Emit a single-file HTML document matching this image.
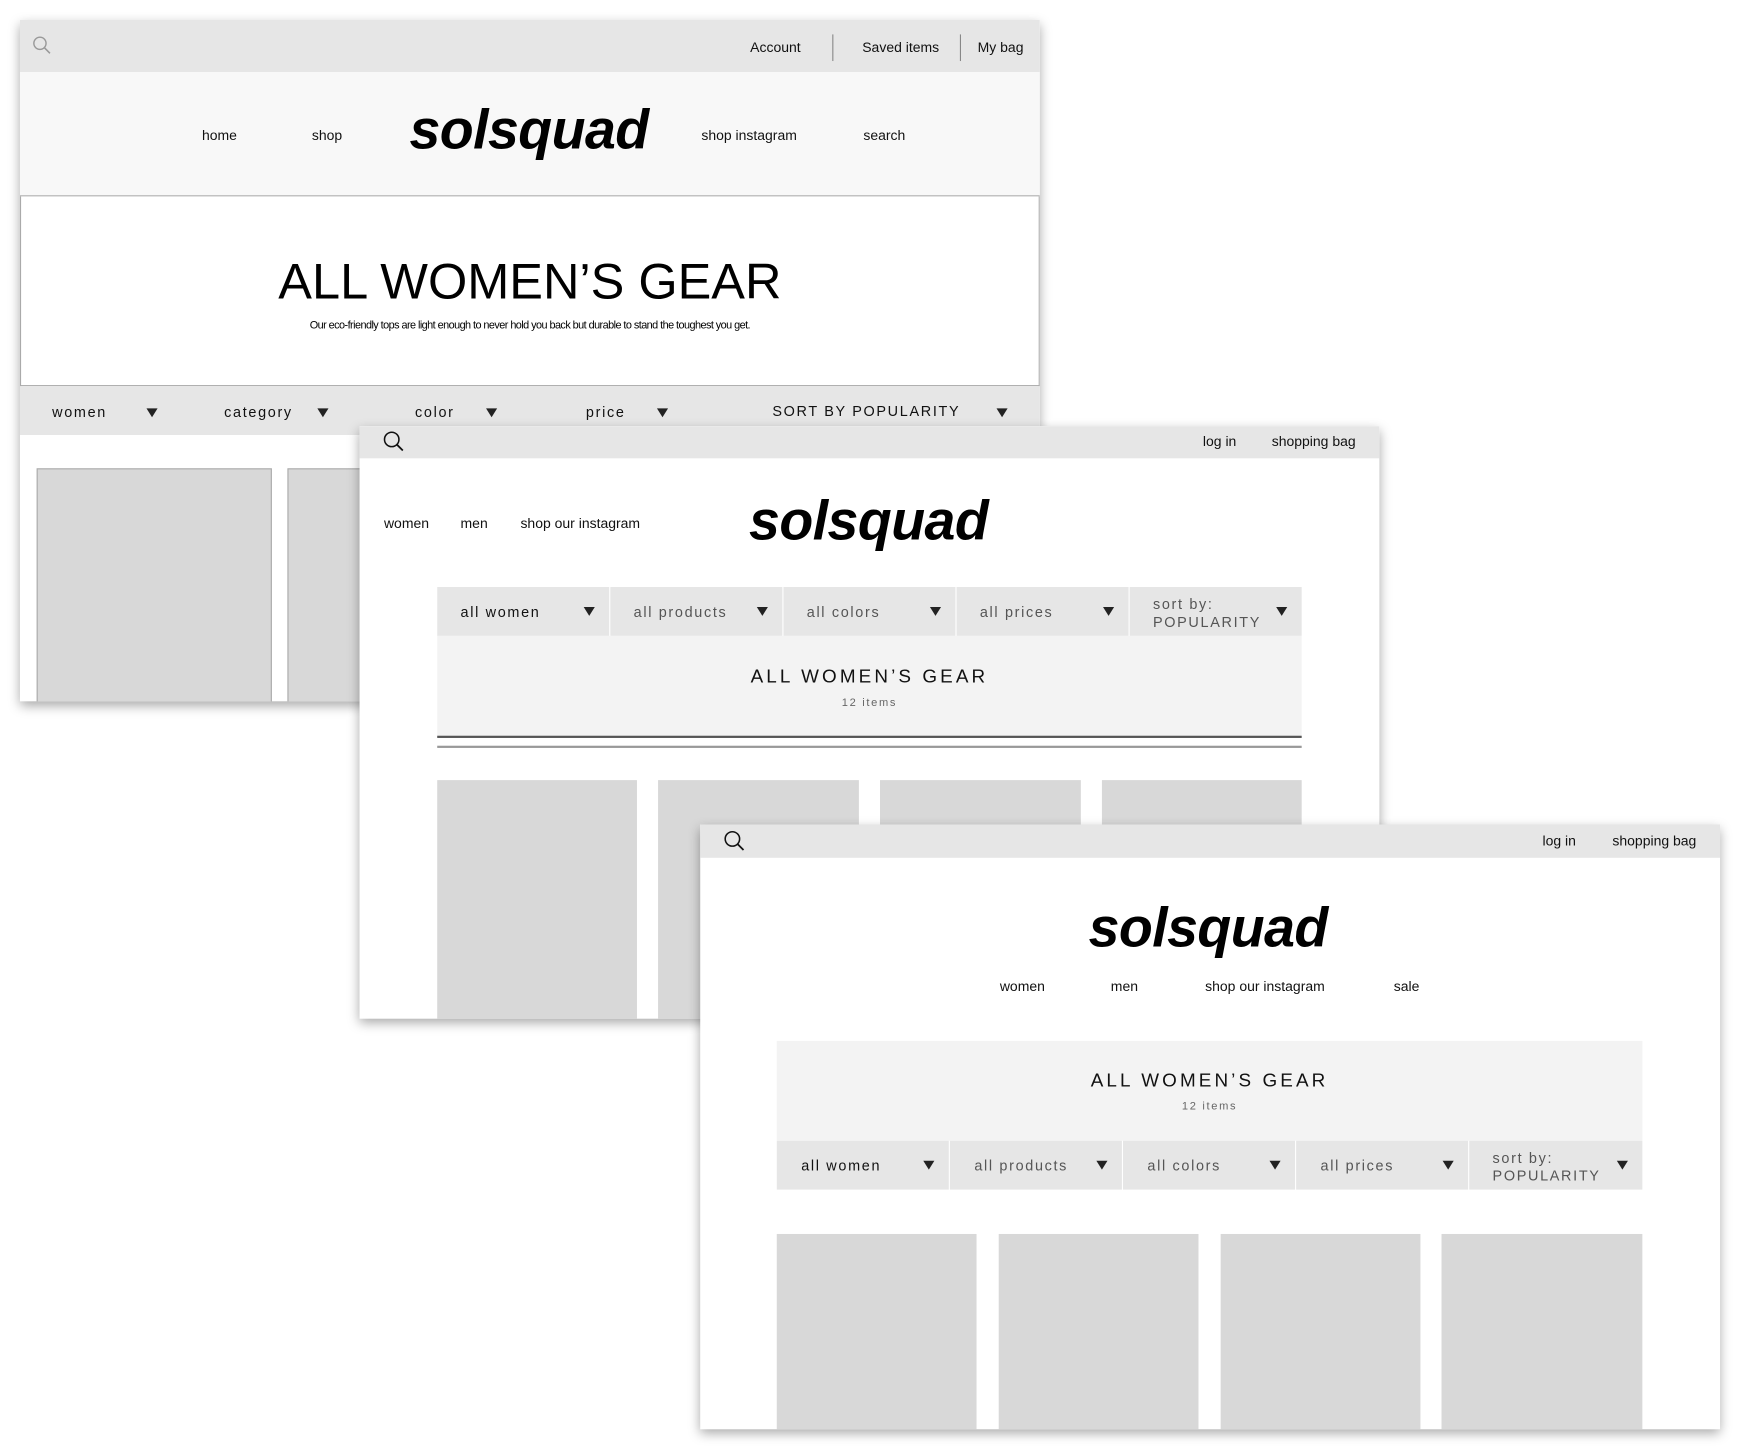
<!DOCTYPE html>
<html><head><meta charset="utf-8"><style>
html,body{margin:0;padding:0;background:#fff;width:1740px;height:1448px;overflow:hidden}
#s{position:absolute;left:0;top:0;width:1568px;height:1305px;transform:scale(1.1097);transform-origin:0 0;font-family:"Liberation Sans",Arial,sans-serif;color:#111}
.w{position:absolute;background:#fff;box-shadow:0 4px 10px rgba(0,0,0,.35);overflow:hidden}
.a{position:absolute;white-space:nowrap;line-height:1}
.bar{position:absolute;left:0;right:0;top:0;background:#e6e6e6}
.logo{position:absolute;font-weight:bold;font-style:italic;font-size:50px;line-height:1;letter-spacing:-0.5px;color:#000}
.t{font-size:12.6px}
.f{font-size:13px;letter-spacing:1.5px}
.tri{position:absolute;width:0;height:0;border-left:5px solid transparent;border-right:5px solid transparent;border-top:8px solid #222}
.box{position:absolute;background:#d8d8d8}
.cell{position:absolute;top:0;height:44px;background:#e6e6e6}
</style></head><body><div id="s">

<!-- Window 1 -->
<div class="w" style="left:18px;top:18px;width:919px;height:614px;background:#fff">
  <div class="bar" style="height:47px"></div>
  <svg style="position:absolute;left:10px;top:13px" width="20" height="20" viewBox="0 0 20 20"><circle cx="8" cy="8" r="5.5" fill="none" stroke="#999" stroke-width="1.3"/><path d="M12 12 L17 17" stroke="#999" stroke-width="1.4"/></svg>
  <div class="a t" style="left:658px;top:19px">Account</div>
  <div style="position:absolute;left:732px;top:13px;width:1px;height:24px;background:#888"></div>
  <div class="a t" style="left:759px;top:19px">Saved items</div>
  <div style="position:absolute;left:847px;top:13px;width:1px;height:24px;background:#888"></div>
  <div class="a t" style="left:863px;top:19px">My bag</div>
  <div style="position:absolute;left:0;right:0;top:47px;height:111px;background:#f8f8f8;border-bottom:1px solid #aaa"></div>
  <div class="a t" style="left:164px;top:98px">home</div>
  <div class="a t" style="left:263px;top:98px">shop</div>
  <div class="logo" style="left:351px;top:74px">solsquad</div>
  <div class="a t" style="left:614px;top:98px">shop instagram</div>
  <div class="a t" style="left:760px;top:98px">search</div>
  <div style="position:absolute;left:0;top:159px;width:917px;height:170px;border:1px solid #aaa;border-top:none;background:#fff"></div>
  <div class="a" style="left:0;width:919px;text-align:center;top:213px;font-size:45.5px;letter-spacing:0;color:#000">ALL WOMEN’S GEAR</div>
  <div class="a" style="left:0;width:919px;text-align:center;top:271px;font-size:9.8px;letter-spacing:-0.5px;color:#000">Our eco-friendly tops are light enough to never hold you back but durable to stand the toughest you get.</div>
  <div style="position:absolute;left:0;right:0;top:330px;height:44px;background:#e6e6e6"></div>
  <div class="a f" style="left:29px;top:347px">women</div><div class="tri" style="left:114px;top:350px"></div>
  <div class="a f" style="left:184px;top:347px">category</div><div class="tri" style="left:268px;top:350px"></div>
  <div class="a f" style="left:356px;top:347px">color</div><div class="tri" style="left:420px;top:350px"></div>
  <div class="a f" style="left:510px;top:347px">price</div><div class="tri" style="left:574px;top:350px"></div>
  <div class="a f" style="left:678px;top:346px">SORT BY POPULARITY</div><div class="tri" style="left:880px;top:350px"></div>
  <div class="box" style="left:15px;top:404px;width:210px;height:220px;border:1px solid #aaa"></div>
  <div class="box" style="left:241px;top:404px;width:210px;height:220px;border:1px solid #aaa"></div>
</div>

<!-- Window 2 -->
<div class="w" style="left:324px;top:384px;width:919px;height:534px">
  <div class="bar" style="height:29px"></div>
  <svg style="position:absolute;left:20px;top:3px" width="22" height="22" viewBox="0 0 22 22"><circle cx="9" cy="9" r="6.5" fill="none" stroke="#111" stroke-width="1.4"/><path d="M13.5 13.5 L19 19" stroke="#111" stroke-width="1.6"/></svg>
  <div class="a t" style="left:760px;top:8px">log in</div>
  <div class="a t" style="left:822px;top:8px">shopping bag</div>
  <div class="a t" style="left:22px;top:82px">women</div>
  <div class="a t" style="left:91px;top:82px">men</div>
  <div class="a t" style="left:145px;top:82px">shop our instagram</div>
  <div class="logo" style="left:351px;top:60px">solsquad</div>
  <div style="position:absolute;left:70px;top:145px;width:779px;height:44px;background:#fff">
    <div class="cell" style="left:0;width:155px"></div><div class="cell" style="left:156px;width:155px"></div><div class="cell" style="left:312px;width:155px"></div><div class="cell" style="left:468px;width:155px"></div><div class="cell" style="left:624px;width:155px"></div>
    <div class="a f" style="left:21px;top:16px;color:#111">all women</div><div class="tri" style="left:132px;top:18px"></div>
    <div class="a f" style="left:177px;top:16px;color:#555">all products</div><div class="tri" style="left:288px;top:18px"></div>
    <div class="a f" style="left:333px;top:16px;color:#555">all colors</div><div class="tri" style="left:444px;top:18px"></div>
    <div class="a f" style="left:489px;top:16px;color:#555">all prices</div><div class="tri" style="left:600px;top:18px"></div>
    <div class="a f" style="left:645px;top:9px;color:#555">sort by:</div><div class="a f" style="left:645px;top:25px;color:#555">POPULARITY</div><div class="tri" style="left:756px;top:18px"></div>
  </div>
  <div style="position:absolute;left:70px;top:189px;width:779px;height:90px;background:#f3f3f3;border-bottom:2px solid #555"></div>
  <div class="a" style="left:70px;width:779px;text-align:center;top:217px;font-size:17px;letter-spacing:2.8px;color:#111">ALL WOMEN’S GEAR</div>
  <div class="a" style="left:70px;width:779px;text-align:center;top:245px;font-size:10px;letter-spacing:1.5px;color:#666">12 items</div>
  <div style="position:absolute;left:70px;top:288px;width:779px;height:2px;background:#999"></div>
  <div class="box" style="left:70px;top:319px;width:180px;height:230px"></div>
  <div class="box" style="left:269px;top:319px;width:181px;height:230px"></div>
  <div class="box" style="left:469px;top:319px;width:181px;height:230px"></div>
  <div class="box" style="left:669px;top:319px;width:180px;height:230px"></div>
</div>

<!-- Window 3 -->
<div class="w" style="left:631px;top:743px;width:919px;height:545px">
  <div class="bar" style="height:30px"></div>
  <svg style="position:absolute;left:20px;top:4px" width="22" height="22" viewBox="0 0 22 22"><circle cx="9" cy="9" r="6.5" fill="none" stroke="#111" stroke-width="1.4"/><path d="M13.5 13.5 L19 19" stroke="#111" stroke-width="1.6"/></svg>
  <div class="a t" style="left:759px;top:9px">log in</div>
  <div class="a t" style="left:822px;top:9px">shopping bag</div>
  <div class="logo" style="left:350px;top:68px">solsquad</div>
  <div class="a t" style="left:270px;top:140px">women</div>
  <div class="a t" style="left:370px;top:140px">men</div>
  <div class="a t" style="left:455px;top:140px">shop our instagram</div>
  <div class="a t" style="left:625px;top:140px">sale</div>
  <div style="position:absolute;left:69px;top:195px;width:780px;height:90px;background:#f3f3f3"></div>
  <div class="a" style="left:69px;width:780px;text-align:center;top:222px;font-size:17px;letter-spacing:2.8px;color:#111">ALL WOMEN’S GEAR</div>
  <div class="a" style="left:69px;width:780px;text-align:center;top:250px;font-size:10px;letter-spacing:1.5px;color:#666">12 items</div>
  <div style="position:absolute;left:69px;top:285px;width:780px;height:44px;background:#fff">
    <div class="cell" style="left:0;width:155px"></div><div class="cell" style="left:156px;width:155px"></div><div class="cell" style="left:312px;width:155px"></div><div class="cell" style="left:468px;width:155px"></div><div class="cell" style="left:624px;width:156px"></div>
    <div class="a f" style="left:22px;top:16px;color:#111">all women</div><div class="tri" style="left:132px;top:18px"></div>
    <div class="a f" style="left:178px;top:16px;color:#555">all products</div><div class="tri" style="left:288px;top:18px"></div>
    <div class="a f" style="left:334px;top:16px;color:#555">all colors</div><div class="tri" style="left:444px;top:18px"></div>
    <div class="a f" style="left:490px;top:16px;color:#555">all prices</div><div class="tri" style="left:600px;top:18px"></div>
    <div class="a f" style="left:645px;top:9px;color:#555">sort by:</div><div class="a f" style="left:645px;top:25px;color:#555">POPULARITY</div><div class="tri" style="left:757px;top:18px"></div>
  </div>
  <div class="box" style="left:69px;top:369px;width:180px;height:180px"></div>
  <div class="box" style="left:269px;top:369px;width:180px;height:180px"></div>
  <div class="box" style="left:469px;top:369px;width:180px;height:180px"></div>
  <div class="box" style="left:668px;top:369px;width:181px;height:180px"></div>
</div>

</div></body></html>
